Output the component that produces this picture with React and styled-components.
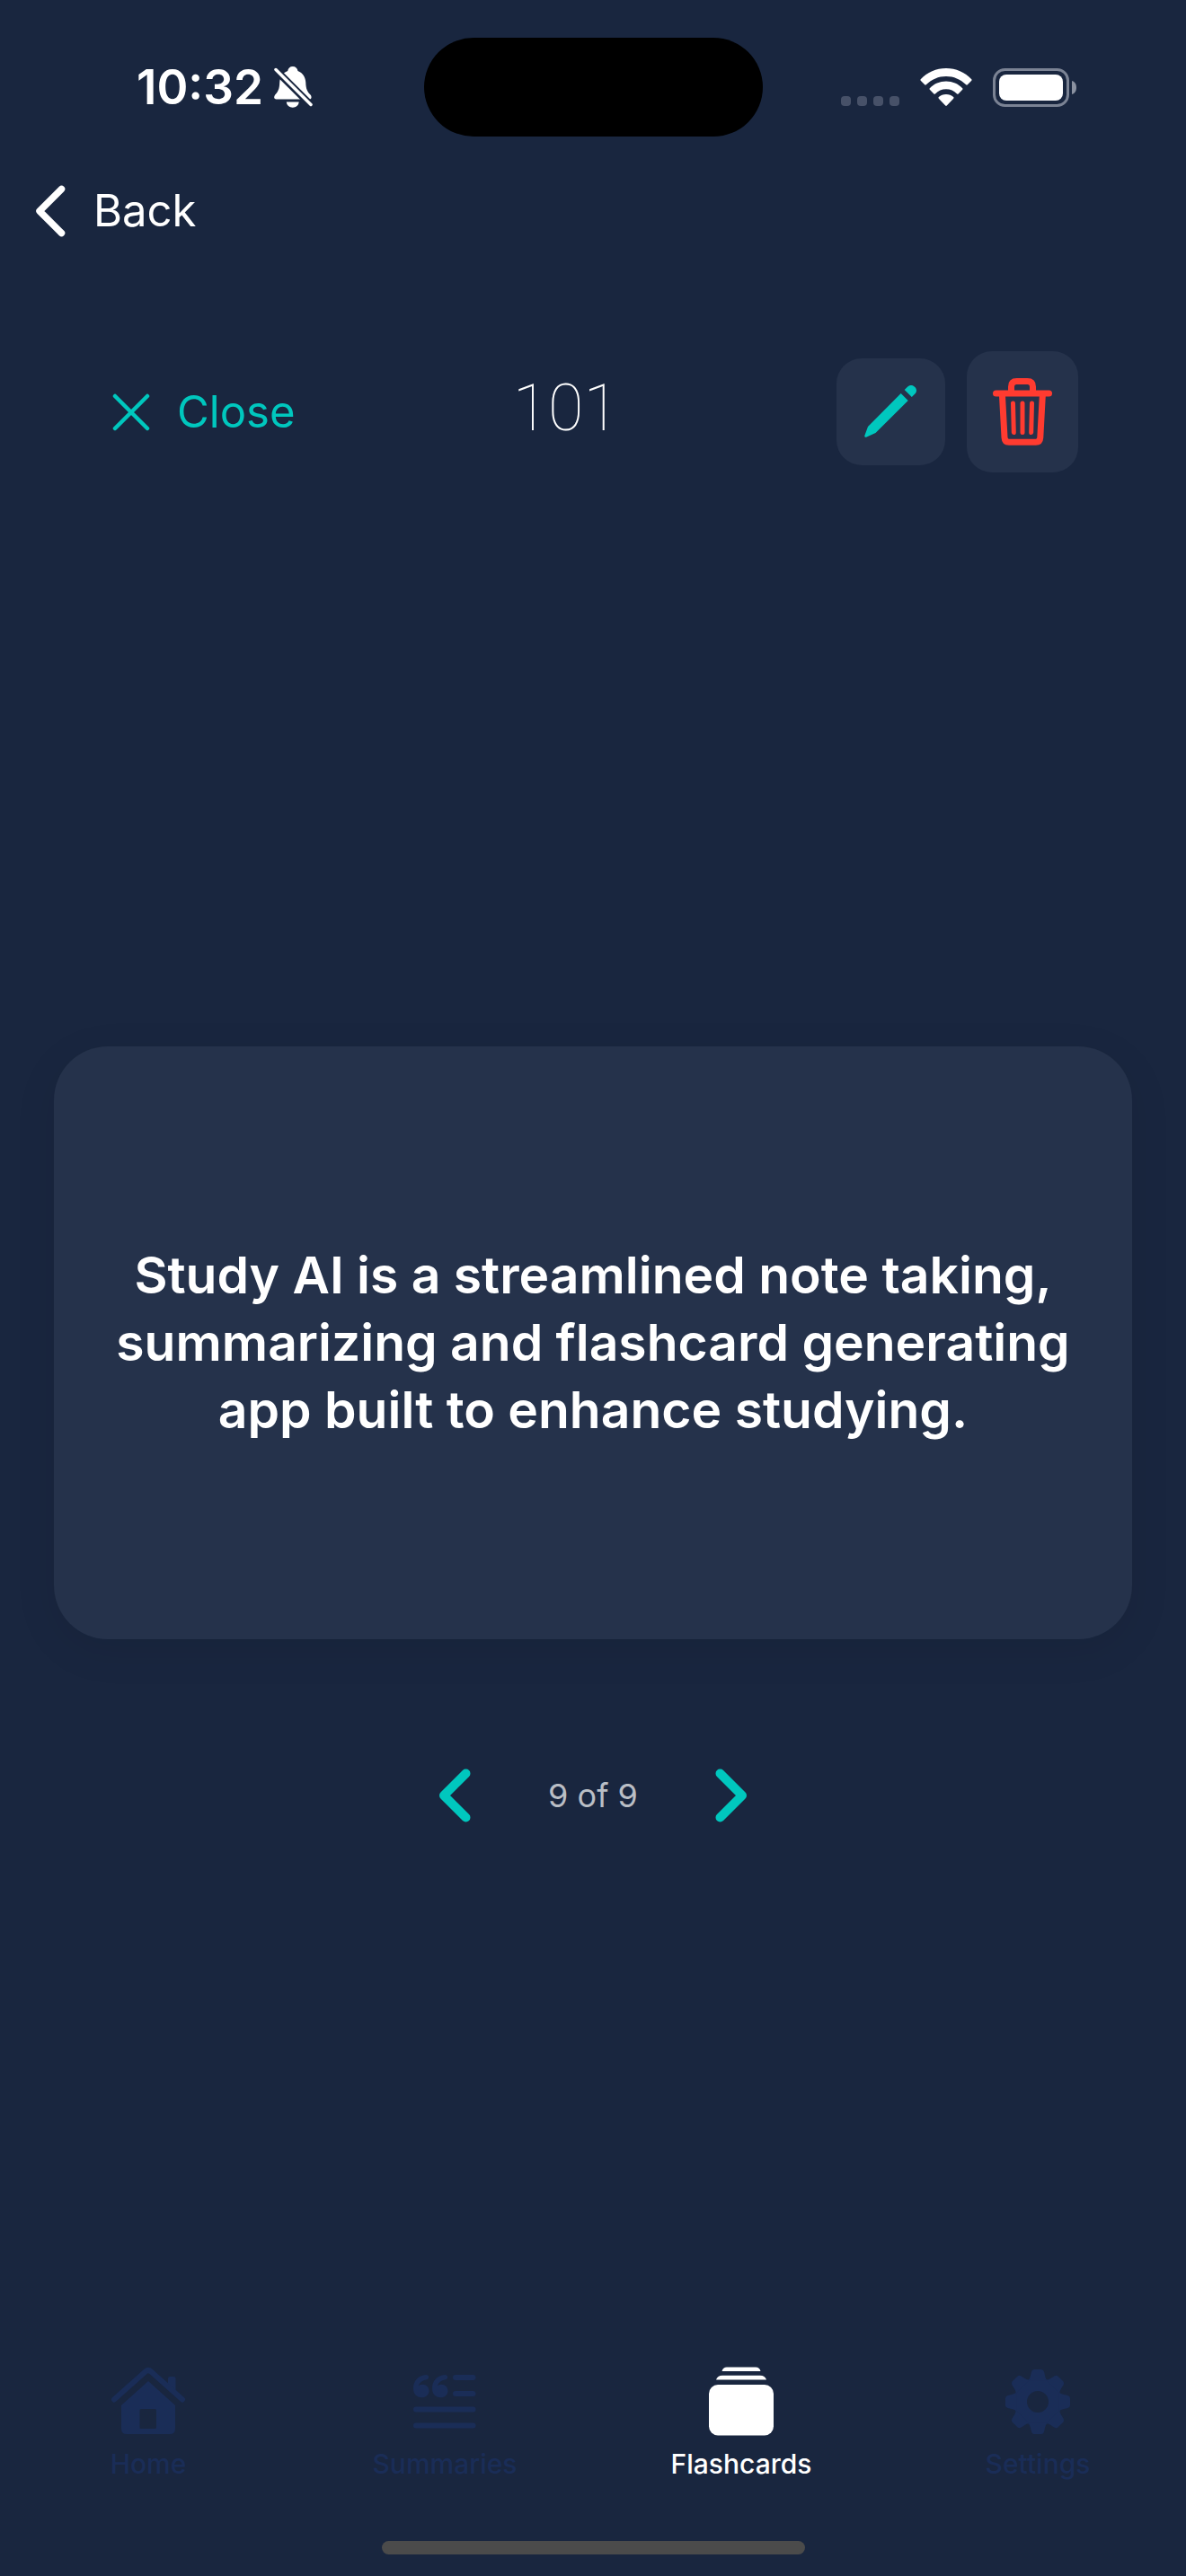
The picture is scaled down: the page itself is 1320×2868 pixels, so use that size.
import React from "react";
import styled, { createGlobalStyle } from "styled-components";

const color = {
  bg: "#19263f",
  surface: "#25324b",
  mint: "#00c7be",
  red: "#ff3b30",
  muted: "#babec5",
  inactive: "#1a2d57",
  indicator: "#4b4b4b",
};

const GlobalStyle = createGlobalStyle`
  *, *::before, *::after { box-sizing: border-box; }
  body {
    margin: 0;
    background: ${color.bg};
    color: #fff;
    font-family: Inter, "Liberation Sans", sans-serif;
  }
  button, a { font: inherit; color: inherit; }
  svg { display: block; flex: none; }
  h1, p { margin: 0; }
`;

const Screen = styled.div`
  min-height: 100vh;
  display: flex;
  flex-direction: column;
  background: ${color.bg};
`;

const StatusBar = styled.header`
  display: grid;
  grid-template-columns: 1fr 377px 1fr;
  align-items: center;
  height: 152px;
  padding-top: 42px;
`;

const StatusLeft = styled.div`
  display: flex;
  align-items: center;
  gap: 12px;
  padding-left: 152px;
`;

const Time = styled.time`
  font-size: 53px;
  line-height: 64px;
  font-weight: 600;
`;

const Island = styled.div`
  height: 110px;
  border-radius: 55px;
  background: #000;
`;

const StatusRight = styled.div`
  display: flex;
  align-items: center;
  justify-content: flex-end;
  gap: 23px;
  padding-right: 122px;
`;

const NavBar = styled.nav`
  display: flex;
  align-items: center;
  height: 165px;
  padding: 0 38px;
`;

const TextButton = styled.button`
  display: flex;
  align-items: center;
  gap: 30px;
  padding: 0;
  border: 0;
  background: none;
  color: ${(p) => p.$color};
  font-size: 49px;
  line-height: 60px;
  cursor: pointer;
`;

const DeckHeader = styled.div`
  display: flex;
  align-items: center;
  justify-content: space-between;
  padding: 74px 120px 0 125px;
`;

const DeckTitle = styled.h1`
  padding-bottom: 8px;
  font-family: Roboto, Inter, sans-serif;
  font-size: 72px;
  line-height: 84px;
  font-weight: 100;
`;

const Actions = styled.div`
  display: flex;
  align-items: center;
  gap: 24px;
`;

const IconButton = styled.button`
  padding: 30px;
  border: 0;
  border-radius: 28px;
  background: ${color.surface};
  cursor: pointer;
`;

const Main = styled.main`
  flex: 1;
  display: flex;
  flex-direction: column;
  justify-content: center;
  gap: 144px;
  padding: 48px 60px 0;
`;

const Card = styled.article`
  display: flex;
  align-items: center;
  justify-content: center;
  min-height: 660px;
  padding: 60px;
  border-radius: 60px;
  background: ${color.surface};
  box-shadow: 0 12px 48px rgba(0, 0, 0, 0.08);
`;

const CardText = styled.p`
  font-size: 57px;
  line-height: 75px;
  font-weight: 600;
  text-align: center;
`;

const Pager = styled.div`
  display: flex;
  align-items: center;
  justify-content: center;
  gap: 86px;
  height: 60px;
`;

const PagerButton = styled.button`
  padding: 0;
  border: 0;
  background: none;
  color: ${color.mint};
  cursor: pointer;
`;

const PagerText = styled.p`
  font-size: 36px;
  line-height: 48px;
  color: ${color.muted};
`;

const TabBar = styled.nav`
  display: grid;
  grid-template-columns: repeat(4, 1fr);
  padding-top: 16px;
`;

const Tab = styled.a`
  display: flex;
  flex-direction: column;
  align-items: center;
  gap: 12px;
  color: ${(p) => (p.$active ? "#fff" : color.inactive)};
  font-size: 30px;
  line-height: 36px;
  font-weight: 500;
  text-decoration: none;
`;

const HomeIndicator = styled.div`
  width: 471px;
  height: 15px;
  margin: 68px auto 24px;
  border-radius: 8px;
  background: ${color.indicator};
`;

const BellSlash = () => (
  <svg width="43" height="46" viewBox="0 0 43 46" aria-hidden="true">
    <path
      fill="#fff"
      d="M20.8 0C24 0 26 2 26.5 5C32 7 35 12 35.3 18C35.5 25 37 28 40.5 31.5C42.5 34 41.5 36.500 39 36.500H2.500C0 36.500-.6 34 1.200 31.500C4.500 28 6 25 6.200 18C6.500 12 9.500 7 15.200 5C15.700 2 17.600 0 20.800 0ZM13.800 39.500H27.700C27.200 43.500 24.500 45.700 20.800 45.700S14.300 43.500 13.800 39.500Z"
    />
    <path stroke={color.bg} strokeWidth="8" d="M-3-1L46 48" />
    <path stroke="#fff" strokeWidth="3.500" strokeLinecap="round" d="M2 3.500L41 42.500" />
  </svg>
);

const SignalDots = () => (
  <svg width="65" height="43" viewBox="0 0 65 43" fill="#475168" aria-hidden="true">
    {[0, 18, 36, 54].map((x) => (
      <rect key={x} x={x} y="31" width="11" height="11" rx="4" />
    ))}
  </svg>
);

const Wifi = () => (
  <svg width="58" height="43" viewBox="0 0 58 43" fill="#fff" aria-hidden="true">
    <path d="M29 0C40 0 50 4.500 57.300 12.200Q58 13 57.300 13.800L52.800 18.300Q52 19 51.200 18.300C45 12.300 37.500 9 29 9S13 12.300 6.800 18.300Q6 19 5.200 18.300L.7 13.800Q0 13 .7 12.200C8 4.500 18 0 29 0Z" />
    <path d="M29 14.500C36 14.500 42.500 17.300 47.200 22.200Q48 23 47.200 23.800L42.600 28.400Q41.900 29 41.100 28.400C37.800 25.200 33.700 23.300 29 23.300S20.200 25.200 16.900 28.400Q16.100 29 15.400 28.400L10.800 23.800Q10 23 10.800 22.200C15.500 17.300 22 14.500 29 14.500Z" />
    <path d="M29 29C32.300 29 35 30 37.200 32.100Q38 32.900 37.200 33.700L29.800 41.500Q29 42.300 28.200 41.500L20.800 33.700Q20 32.900 20.800 32.100C23 30 25.700 29 29 29Z" />
  </svg>
);

const Battery = () => (
  <svg width="93" height="43" viewBox="0 0 93 43" aria-hidden="true">
    <rect x="1.500" y="1.500" width="82" height="40" rx="12" fill="none" stroke="#7b8394" strokeWidth="3" />
    <rect x="7" y="7" width="71" height="29" rx="8" fill="#fff" />
    <path d="M88 14C91.500 15 93 18 93 21.500S91.500 28 88 29Z" fill="#8a91a0" />
  </svg>
);

const BackChevron = () => (
  <svg width="36" height="58" viewBox="0 0 36 58" fill="none" aria-hidden="true">
    <path d="M30.500 4.500L6 29L30.500 53.500" stroke="currentColor" strokeWidth="7.500" strokeLinecap="round" strokeLinejoin="round" />
  </svg>
);

const CloseIcon = () => (
  <svg width="42" height="42" viewBox="0 0 42 42" fill="none" aria-hidden="true">
    <path d="M3 3L39 39M39 3L3 39" stroke="currentColor" strokeWidth="4.500" strokeLinecap="round" />
  </svg>
);

const PencilIcon = () => (
  <svg width="61" height="59" viewBox="0 0 61 59" fill={color.mint} aria-hidden="true">
    <path d="M41.700 9L49.700 17L13.500 53L3.600 57.600C2 58.300.8 57.200 1.400 55.700L5 46Z" />
    <path d="M45.700 5L49 1.700C51.500-.6 55-.3 57 1.700L57.300 2C59.500 4.200 59.600 7 57.300 9.500L53.800 13Z" />
  </svg>
);

const TrashIcon = () => (
  <svg width="64" height="75" viewBox="0 0 64 75" fill="none" stroke={color.red} strokeLinecap="round" overflow="visible" aria-hidden="true">
    <path d="M2.500 17H61.500" strokeWidth="7" />
    <path d="M19.500 16V9.500Q19.500 3.500 25.500 3.500H37.500Q43.500 3.500 43.500 9.500V16" strokeWidth="7" strokeLinecap="butt" />
    <path d="M9.400 18L12 66Q12.300 71.300 17 71.300H46.800Q51.500 71.300 51.800 66L54.400 18" strokeWidth="7" strokeLinecap="butt" />
    <path d="M21.500 28L22.300 60.500M32 28V60.500M42.500 28L41.700 60.500" strokeWidth="5" />
  </svg>
);

const PagerChevron = ({ next }) => (
  <svg width="36" height="60" viewBox="0 0 36 60" fill="none" aria-hidden="true">
    <path
      d={next ? "M5.500 5.500L30 30L5.500 54.500" : "M30.500 5.500L6 30L30.500 54.500"}
      stroke="currentColor"
      strokeWidth="10"
      strokeLinecap="round"
      strokeLinejoin="round"
    />
  </svg>
);

const HomeIcon = () => (
  <svg width="82" height="78" viewBox="0 0 82 78" fill="currentColor" aria-hidden="true">
    <path d="M63 13Q63 11 65 11H69.500Q71.500 11 71.500 13V30L63 22Z" />
    <path d="M3 36.500L37.800 5.500Q41 2.500 44.200 5.500L79 36.500" fill="none" stroke="currentColor" strokeWidth="6" strokeLinecap="round" />
    <path fillRule="evenodd" d="M41 16L71 43V69Q71 75 65 75H17Q11 75 11 69V43ZM33 47Q31.500 47 31.500 48.500V67.500Q31.500 69 33 69H48.500Q50 69 50 67.500V48.500Q50 47 48.500 47Z" />
  </svg>
);

const SummariesIcon = () => (
  <svg width="70" height="78" viewBox="0 0 70 78" fill="currentColor" aria-hidden="true">
    {[0, 21].map((x) => (
      <path
        key={x}
        transform={`translate(${x} 0)`}
        d="M14 9C17.800 8.800 18.200 13.700 15 14.300C10 15.200 7 17.700 5.800 21C12 17.800 17.500 21.500 17.500 27C17.500 31.200 14 34.300 9.500 34.300C3.500 34.300 0 30 0 24C0 16 5.500 9.500 14 9Z"
      />
    ))}
    <rect x="44" y="9" width="25.500" height="6" rx="3" />
    <rect x="44" y="27" width="25.500" height="6" rx="3" />
    <rect y="44.500" width="69.500" height="6" rx="3" />
    <rect y="62.500" width="69.500" height="6" rx="3" />
  </svg>
);

const FlashcardsIcon = () => (
  <svg width="74" height="78" viewBox="0 0 74 78" fill="currentColor" aria-hidden="true">
    <path d="M15.500 5Q16.500 .5 21 .5H53Q57.500 .5 58.500 5Z" />
    <path d="M9 14.500Q10.500 9.700 16 9.700H58Q63.500 9.700 65 14.500Z" />
    <rect x="1" y="20" width="72" height="56.500" rx="10" />
  </svg>
);

const SettingsIcon = () => (
  <svg width="74" height="78" viewBox="-37 -39 74 78" fill="currentColor" aria-hidden="true">
    <path
      fillRule="evenodd"
      d="M0-26.500A26.500 26.500 0 1 1 0 26.500A26.500 26.500 0 1 1 0-26.500ZM0-12A12 12 0 1 0 0 12A12 12 0 1 0 0-12Z"
    />
    {[0, 45, 90, 135, 180, 225, 270, 315].map((a) => (
      <path key={a} transform={`rotate(${a})`} d="M-11-23.500Q-9-25-8.300-28L-7-33.500Q-6.200-36-4-36H4Q6.200-36 7-33.500L8.300-28Q9-25 11-23.500Z" />
    ))}
  </svg>
);

const tabs = [
  { label: "Home", Icon: HomeIcon },
  { label: "Summaries", Icon: SummariesIcon },
  { label: "Flashcards", Icon: FlashcardsIcon, active: true },
  { label: "Settings", Icon: SettingsIcon },
];

export default function App() {
  return (
    <Screen>
      <GlobalStyle />
      <StatusBar>
        <StatusLeft>
          <Time>10:32</Time>
          <BellSlash />
        </StatusLeft>
        <Island />
        <StatusRight>
          <SignalDots />
          <Wifi />
          <Battery />
        </StatusRight>
      </StatusBar>
      <NavBar>
        <TextButton type="button" $color="#fff">
          <BackChevron />
          Back
        </TextButton>
      </NavBar>
      <DeckHeader>
        <TextButton type="button" $color={color.mint}>
          <CloseIcon />
          Close
        </TextButton>
        <DeckTitle>101</DeckTitle>
        <Actions>
          <IconButton type="button" aria-label="Edit flashcard">
            <PencilIcon />
          </IconButton>
          <IconButton type="button" aria-label="Delete flashcard">
            <TrashIcon />
          </IconButton>
        </Actions>
      </DeckHeader>
      <Main>
        <Card>
          <CardText>
            Study AI is a streamlined note taking, summarizing and flashcard generating app built to enhance studying.
          </CardText>
        </Card>
        <Pager>
          <PagerButton type="button" aria-label="Previous card">
            <PagerChevron />
          </PagerButton>
          <PagerText>9 of 9</PagerText>
          <PagerButton type="button" aria-label="Next card">
            <PagerChevron next />
          </PagerButton>
        </Pager>
      </Main>
      <TabBar>
        {tabs.map(({ label, Icon, active }) => (
          <Tab key={label} href={`#${label.toLowerCase()}`} $active={active} aria-current={active ? "page" : undefined}>
            <Icon />
            {label}
          </Tab>
        ))}
      </TabBar>
      <HomeIndicator />
    </Screen>
  );
}
